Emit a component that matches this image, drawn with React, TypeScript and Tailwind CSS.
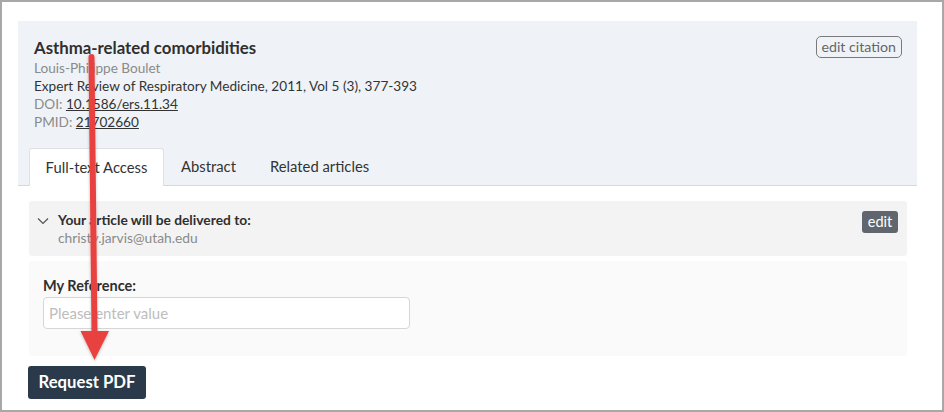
const font = { fontFamily: 'Lato, "Open Sans", sans-serif' }

function Arrow() {
  return (
    <svg
      className="pointer-events-none absolute left-0 top-0"
      width="944"
      height="412"
      viewBox="0 0 944 412"
    >
      <defs>
        <filter id="sh" x="-50%" y="-10%" width="200%" height="120%">
          <feDropShadow dx="0" dy="1" stdDeviation="1.5" floodColor="#000" floodOpacity="0.25" />
        </filter>
      </defs>
      <g filter="url(#sh)" fill="#e8423f">
        <path d="M89.5 55 L92.5 332" stroke="#e8423f" strokeWidth="6" strokeLinecap="round" fill="none" />
        <path d="M78.5 329 L107 329 L92.5 358 Z" />
      </g>
    </svg>
  )
}

function Chevron() {
  return (
    <svg width="12" height="8" viewBox="0 0 12 8" className="mt-[6px] shrink-0">
      <path d="M1 1.5 L6 6.5 L11 1.5" fill="none" stroke="#555" strokeWidth="1.2" />
    </svg>
  )
}

export default function App() {
  return (
    <div
      className="relative h-[412px] w-[944px] overflow-hidden border-2 border-[#a8a8a8] bg-white pl-[16px] pr-[24px] pt-[19px]"
      style={font}
    >
      <div className="w-[899px]">
        {/* Citation panel */}
        <div className="bg-[#eff3f7]">
          <div className="flex items-start justify-between pl-4 pr-[15px] pt-4">
            <div>
              <h1 className="text-[16.8px] font-bold leading-[22px] text-[#2f2f2f]">
                Asthma-related comorbidities
              </h1>
              <div className="text-[13.6px] leading-[18px]">
                <p className="text-[#8a8a8a]">Louis-Philippe Boulet</p>
                <p className="text-[#333]">Expert Review of Respiratory Medicine, 2011, Vol 5 (3), 377-393</p>
                <p className="text-[#8a8a8a]">
                  DOI: <span className="text-[#333] underline">10.1586/ers.11.34</span>
                </p>
                <p className="text-[#8a8a8a]">
                  PMID: <span className="text-[#333] underline">21702660</span>
                </p>
              </div>
            </div>
            <button className="-mt-px h-[22px] rounded-[5px] border border-[#7a7a7a] px-[5px] text-[14.2px] leading-none text-[#666]">
              edit citation
            </button>
          </div>

          {/* Tabs */}
          <div className="mt-[17px] flex border-b border-[#d4d8dc] pl-[11px] text-[14.8px] text-[#333]">
            <div className="-mb-px flex h-[38px] w-[135px] items-center justify-center rounded-t-[3px] border border-b-0 border-[#dde1e5] bg-white">
              Full-text Access
            </div>
            <div className="flex h-[37px] items-center px-[17px]">Abstract</div>
            <div className="flex h-[37px] items-center px-[17px]">Related articles</div>
          </div>
        </div>

        {/* Content */}
        <div className="pl-[11px] pr-[10px] pt-[15px]">
          <div className="flex h-[55px] items-start justify-between rounded-[3px] bg-[#f3f3f3] pl-[8px] pr-[9px] pt-[10px]">
            <div className="flex items-start gap-[9px]">
              <Chevron />
              <div className="text-[13.8px] leading-[18px]">
                <p className="font-bold text-[#2f2f2f]">Your article will be delivered to:</p>
                <p className="text-[#8a8a8a]">christy.jarvis@utah.edu</p>
              </div>
            </div>
            <span className="flex h-[22px] w-[36px] items-center justify-center rounded-[3px] bg-[#5f666e] text-[14.5px] text-white">
              edit
            </span>
          </div>

          <div className="mt-[5px] h-[95px] rounded-[3px] bg-[#fafafa] pl-[14px] pt-[16px]">
            <p className="text-[14.5px] font-bold leading-[18px] text-[#2f2f2f]">My Reference:</p>
            <input
              className="mt-[2px] h-[32px] w-[367px] rounded-[4px] border border-[#d6d6d6] bg-white px-[5px] text-[15px] placeholder:text-[#bdbdbd] outline-none"
              placeholder="Please enter value"
              style={font}
            />
          </div>

          <button className="-ml-px mt-[10px] h-[33px] w-[118px] rounded-[3px] bg-[#2a3a4b] text-[16.7px] font-bold text-white">
            Request PDF
          </button>
        </div>
      </div>
      <Arrow />
    </div>
  )
}
